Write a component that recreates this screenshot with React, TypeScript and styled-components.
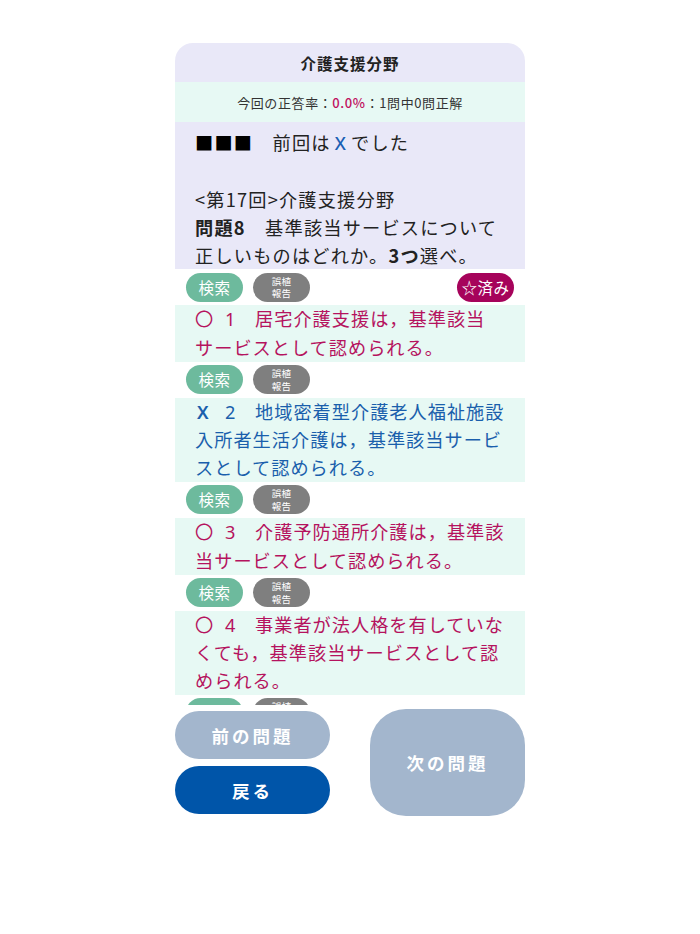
import React from "react";
import styled, { createGlobalStyle } from "styled-components";

const Global = createGlobalStyle`
  html, body { margin: 0; padding: 0; background: #ffffff; }
  body { font-family: "Noto Sans CJK JP", "Noto Sans", sans-serif; color: #222; }
`;

const Page = styled.div`
  display: flex;
  flex-direction: column;
  align-items: center;
  padding-top: 43px;
`;

const Card = styled.div`
  width: 350px;
  display: flex;
  flex-direction: column;
`;

const Header = styled.div`
  height: 39px;
  background: #e9e8f8;
  border-radius: 18px 18px 0 0;
  display: flex;
  align-items: center;
  justify-content: center;
  font-size: 15.5px;
  letter-spacing: 1px;
  font-weight: 700;
  color: #222;
`;

const Stats = styled.div`
  height: 40px;
  background: #e7f9f4;
  display: flex;
  align-items: center;
  justify-content: center;
  font-size: 13px;
  letter-spacing: 0.6px;
  color: #333;
`;

const Rate = styled.span`
  color: #c0105f;
  font-weight: 500;
`;

const Scroll = styled.div`
  height: 583px;
  overflow: hidden;
  display: flex;
  flex-direction: column;
`;

const Question = styled.div`
  background: #e9e8f8;
  padding: 6px 18px 0 20px;
  font-size: 18.2px;
  letter-spacing: 1.2px;
  line-height: 28px;
  color: #222;
  flex-shrink: 0;
`;

const Line = styled.div`
  min-height: 28px;
`;

const Squares = styled.span`
  color: #000;
`;

const XMark = styled.span<{ $c: string }>`
  color: ${(p) => p.$c};
  font-family: "Noto Sans", sans-serif;
  font-weight: 500;
  margin: 0 4px;
`;

const Strong = styled.b`
  font-weight: 700;
`;

const NoWrap = styled.span`
  white-space: nowrap;
`;

const PillRow = styled.div`
  display: flex;
  align-items: center;
  justify-content: space-between;
  height: 29px;
  padding: 3.5px 11px;
  flex-shrink: 0;
`;

const PillGroup = styled.div`
  display: flex;
  gap: 10px;
`;

const Pill = styled.div<{ $bg: string; $small?: boolean }>`
  width: 57px;
  height: 29px;
  border-radius: 15px;
  background: ${(p) => p.$bg};
  color: #fff;
  display: flex;
  align-items: center;
  justify-content: center;
  text-align: center;
  font-size: ${(p) => (p.$small ? "9.5px" : "15.5px")};
  letter-spacing: ${(p) => (p.$small ? "0.3px" : "0.5px")};
  line-height: ${(p) => (p.$small ? "12.5px" : "29px")};
`;

const Option = styled.div<{ $c: string }>`
  background: #e7f9f4;
  padding: 0 18px 0 20px;
  font-size: 18.2px;
  letter-spacing: 1px;
  line-height: 27.8px;
  color: ${(p) => p.$c};
  flex-shrink: 0;
`;

const Lead = styled.span<{ $w: number; $latin?: boolean }>`
  display: inline-block;
  width: ${(p) => p.$w}px;
  ${(p) => (p.$latin ? `font-family: "Noto Sans", sans-serif; font-weight: 600; padding-left: 2px; box-sizing: border-box;` : "")}
`;

const Num = styled.span`
  display: inline-block;
  width: 30px;
  font-family: "Noto Sans", sans-serif;
`;

const Footer = styled.div`
  display: flex;
  justify-content: space-between;
  align-items: center;
  margin-top: 4px;
`;

const LeftCol = styled.div`
  display: flex;
  flex-direction: column;
  gap: 7px;
`;

const Btn = styled.div<{ $bg: string; $h: number; $r: number }>`
  width: 155px;
  height: ${(p) => p.$h}px;
  border-radius: ${(p) => p.$r}px;
  background: ${(p) => p.$bg};
  color: #fff;
  font-size: 17.5px;
  font-weight: 700;
  letter-spacing: 3px;
  display: flex;
  align-items: center;
  justify-content: center;
`;

const PINK = "#b5135e";
const BLUE = "#1a5fac";

const options: { mark: string; c: string; n: string; text: React.ReactNode }[] = [
  {
    mark: "〇",
    c: PINK,
    n: "1",
    text: (
      <>
        居宅介護支援は，基準該当<NoWrap>サー</NoWrap>ビスとして認められる。
      </>
    ),
  },
  { mark: "X", c: BLUE, n: "2", text: "地域密着型介護老人福祉施設入所者生活介護は，基準該当サービスとして認められる。" },
  { mark: "〇", c: PINK, n: "3", text: "介護予防通所介護は，基準該当サービスとして認められる。" },
  { mark: "〇", c: PINK, n: "4", text: "事業者が法人格を有していなくても，基準該当サービスとして認められる。" },
  { mark: "〇", c: PINK, n: "5", text: "基準該当サービスは，市町村の判断で認められる。" },
];

const Pills = ({ star }: { star?: boolean }) => (
  <PillRow>
    <PillGroup>
      <Pill $bg="#6dba9d">検索</Pill>
      <Pill $bg="#7f7f7f" $small>
        誤植
        <br />
        報告
      </Pill>
    </PillGroup>
    {star && <Pill $bg="#a6035b">☆済み</Pill>}
  </PillRow>
);

export default function App() {
  return (
    <>
      <Global />
      <Page>
        <Card>
          <Header>介護支援分野</Header>
          <Stats>
            今回の正答率：<Rate>0.0%</Rate>：1問中0問正解
          </Stats>
          <Scroll>
            <Question>
              <Line>
                <Squares>■■■</Squares>　前回は<XMark $c="#1a5fb4">X</XMark>でした
              </Line>
              <Line />
              <Line>&lt;第17回&gt;介護支援分野</Line>
              <Line>
                <Strong>問題8</Strong>　基準該当サービスについて正しいものはどれか。<Strong>3つ</Strong>選べ。
              </Line>
            </Question>
            {options.map((o, i) => (
              <React.Fragment key={o.n}>
                <Pills star={i === 0} />
                <Option $c={o.c}>
                  <Lead $w={30} $latin={o.mark === "X"}>{o.mark}</Lead>
                  <Num>{o.n}</Num>
                  {o.text}
                </Option>
              </React.Fragment>
            ))}
          </Scroll>
          <Footer>
            <LeftCol>
              <Btn $bg="#a3b6cd" $h={48} $r={24}>前の問題</Btn>
              <Btn $bg="#0055a9" $h={48} $r={24}>戻る</Btn>
            </LeftCol>
            <Btn $bg="#a3b6cd" $h={107} $r={36}>次の問題</Btn>
          </Footer>
        </Card>
      </Page>
    </>
  );
}
